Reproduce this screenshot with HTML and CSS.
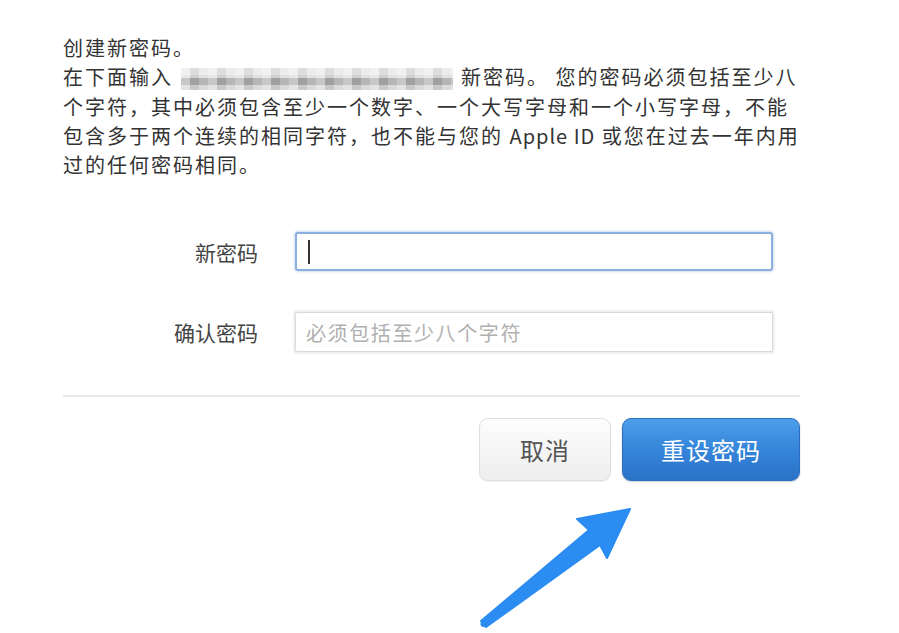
FILE: index.html
```html
<!DOCTYPE html>
<html lang="zh-CN">
<head>
<meta charset="utf-8">
<title>创建新密码</title>
<link rel="stylesheet" href="styles.css">
</head>
<body>
<div class="page">
  <div class="intro">
    <p class="line">创建新密码。</p>
    <p class="line">在下面输入<span class="blur"></span>新密码。 您的密码必须包括至少八</p>
    <p class="line">个字符，其中必须包含至少一个数字、一个大写字母和一个小写字母，不能</p>
    <p class="line">包含多于两个连续的相同字符，也不能与您的 <span class="latin">Apple ID</span> 或您在过去一年内用</p>
    <p class="line">过的任何密码相同。</p>
  </div>
  <div class="form">
    <div class="row">
      <label class="label">新密码</label>
      <div class="input focused"><span class="caret"></span></div>
    </div>
    <div class="row row-second">
      <label class="label">确认密码</label>
      <div class="input plain"><span class="placeholder">必须包括至少八个字符</span></div>
    </div>
  </div>
  <div class="divider"></div>
  <div class="actions">
    <button class="btn btn-cancel">取消</button>
    <button class="btn btn-primary">重设密码</button>
  </div>
  <svg class="arrow" width="899" height="633" viewBox="0 0 899 633">
    <polygon points="481,621 589,530 577,519 630,509 607,558 600,545 486,627" fill="#2b8cf2" stroke="#2b8cf2" stroke-width="2" stroke-linejoin="round"/>
    <circle cx="483.5" cy="624" r="3" fill="#2b8cf2"/>
  </svg>
</div>
</body>
</html>
```

FILE: styles.css
```css
html, body {
  margin: 0;
  padding: 0;
  background: #ffffff;
}

.page {
  position: relative;
  width: 899px;
  height: 633px;
  overflow: hidden;
  font-family: "Noto Sans CJK SC", "Noto Sans", sans-serif;
  color: #333333;
}

.intro {
  padding: 33px 0 0 63px;
}

.line {
  margin: 0;
  font-size: 20px;
  line-height: 29.3px;
  letter-spacing: 2px;
  white-space: nowrap;
}

.latin {
  letter-spacing: 1px;
}

.blur {
  display: inline-block;
  width: 272px;
  height: 22px;
  margin-left: 8px;
  margin-right: 8px;
  vertical-align: -5px;
  background:
    repeating-linear-gradient(90deg, rgba(255,255,255,0.35) 0 9px, rgba(0,0,0,0.05) 9px 18px, rgba(255,255,255,0.15) 18px 27px),
    linear-gradient(180deg, #e9e9e9 0 7px, #dcdcdc 7px 10px, #a9a9a9 10px 17px, #d4d4d4 17px 22px);
}

.form {
  margin-top: 53px;
}

.row {
  display: flex;
  align-items: center;
}

.row-second {
  margin-top: 41px;
}

.label {
  flex: 0 0 295px;
  padding-right: 37px;
  box-sizing: border-box;
  text-align: right;
  font-size: 21px;
  color: #444444;
}

.input {
  flex: 0 0 478px;
  height: 39px;
  box-sizing: border-box;
  border-radius: 3px;
  display: flex;
  align-items: center;
  background: #ffffff;
}

.focused {
  border: 2px solid #8cb0dc;
  box-shadow: 0 0 3px rgba(80, 130, 200, 0.55);
}

.caret {
  display: block;
  width: 2px;
  height: 24px;
  margin-left: 11px;
  background: #333333;
}

.plain {
  height: 40px;
  border: 1px solid #d9d9d9;
  box-shadow: 0 0 0 2px #f1f1f1;
  border-radius: 2px;
}

.placeholder {
  margin-left: 10px;
  font-size: 20px;
  letter-spacing: 1.6px;
  color: #b0b0b0;
}

.divider {
  margin: 43px 0 0 63px;
  width: 737px;
  height: 2px;
  background: #e8e8e8;
}

.actions {
  display: flex;
  justify-content: flex-end;
  gap: 11px;
  width: 800px;
  margin-top: 21px;
}

.btn {
  height: 63px;
  border-radius: 9px;
  font-family: "Noto Sans CJK SC", "Noto Sans", sans-serif;
  font-size: 24px;
  letter-spacing: 1px;
  cursor: pointer;
  padding: 0;
}

.btn-cancel {
  width: 132px;
  border: 1px solid #dedede;
  background: linear-gradient(180deg, #fdfdfd 0%, #eeeeee 100%);
  color: #555555;
  box-shadow: 0 1px 1px rgba(0, 0, 0, 0.06);
}

.btn-primary {
  width: 178px;
  border: 1px solid #2c6dbd;
  background: linear-gradient(180deg, #4d9ee9 0%, #3585da 50%, #2a72c8 100%);
  color: #ffffff;
  box-shadow: 0 1px 2px rgba(0, 0, 0, 0.2);
}

.arrow {
  position: absolute;
  left: 0;
  top: 0;
  pointer-events: none;
}
```
